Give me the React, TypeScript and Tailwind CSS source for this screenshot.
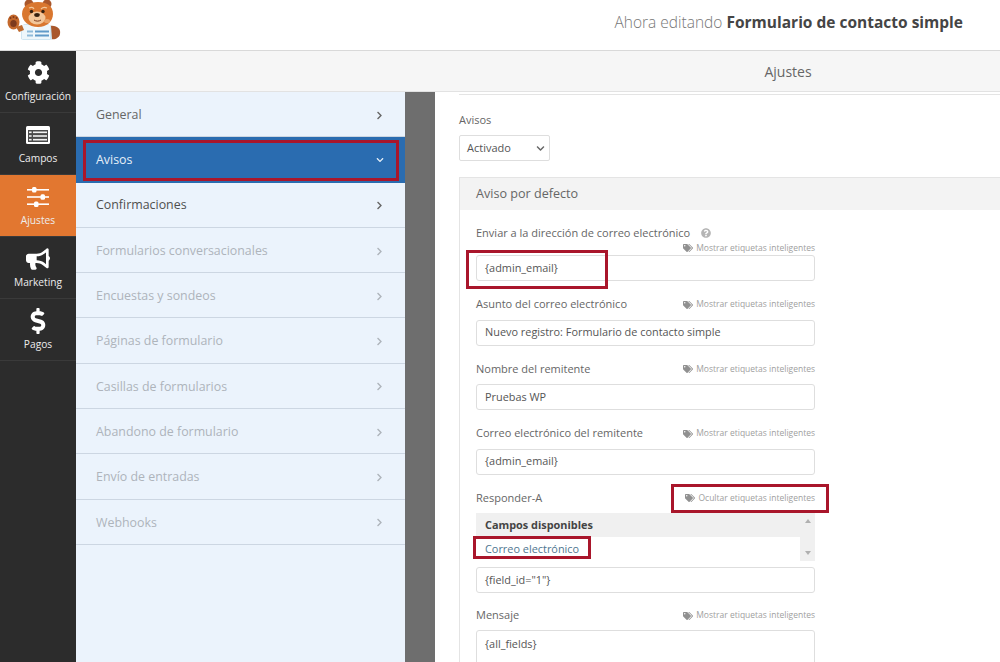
import { FaBullhorn, FaChevronDown, FaChevronRight, FaCog, FaDollarSign, FaQuestionCircle, FaTags } from "react-icons/fa";
import type { ReactNode } from "react";

function CamposIcon() {
  return (
    <svg width="24" height="18" viewBox="0 0 24 18">
      <rect x="0" y="0" width="24" height="18" rx="1.5" fill="#fff" />
      <rect x="2" y="4" width="20" height="12" fill="#4a4a4a" />
      <rect x="7" y="5.5" width="14" height="1.6" fill="#f2f2f2" />
      <rect x="7" y="9.2" width="14" height="1.6" fill="#f2f2f2" />
      <rect x="7" y="12.9" width="14" height="1.6" fill="#f2f2f2" />
      <rect x="3" y="5.5" width="2.6" height="1.6" fill="#f2f2f2" />
      <rect x="3" y="9.2" width="2.6" height="1.6" fill="#f2f2f2" />
      <rect x="3" y="12.9" width="2.6" height="1.6" fill="#f2f2f2" />
    </svg>
  );
}

function AjustesIcon() {
  return (
    <svg width="22" height="20" viewBox="0 0 22 20" fill="#fff">
      <rect x="0" y="2" width="22" height="1.6" />
      <rect x="0" y="9.2" width="22" height="1.6" />
      <rect x="0" y="16.4" width="22" height="1.6" />
      <rect x="5" y="0" width="4.5" height="5.6" rx="1.5" />
      <rect x="13.5" y="7.2" width="4.5" height="5.6" rx="1.5" />
      <rect x="7" y="14.4" width="4.5" height="5.6" rx="1.5" />
    </svg>
  );
}

const nav: { label: string; icon: ReactNode; active?: boolean }[] = [
  { label: "Configuración", icon: <FaCog size={23} /> },
  { label: "Campos", icon: <CamposIcon /> },
  { label: "Ajustes", icon: <AjustesIcon />, active: true },
  { label: "Marketing", icon: <FaBullhorn size={24} /> },
  { label: "Pagos", icon: <FaDollarSign size={26} /> },
];

const menu = [
  { label: "General", tone: "text-[#666]" },
  { label: "Avisos", active: true },
  { label: "Confirmaciones", tone: "text-[#4f4f4f]" },
  { label: "Formularios conversacionales" },
  { label: "Encuestas y sondeos" },
  { label: "Páginas de formulario" },
  { label: "Casillas de formularios" },
  { label: "Abandono de formulario" },
  { label: "Envío de entradas" },
  { label: "Webhooks" },
];

function Bear() {
  return (
    <svg width="70" height="50" viewBox="0 0 70 50" className="block">
      {/* tail */}
      <path d="M50 26c7-1 11 3 10 8-1 4-5 6-9 5z" fill="#a9572b" />
      {/* shirt */}
      <path d="M24 24h24l3 2 1 13-2 1H23l-2-1v-12z" fill="#cfe6f2" />
      <rect x="22" y="25" width="28" height="14" fill="#eef7fb" />
      <path d="M30 24l6 5 6-5z" fill="#ffffff" />
      <rect x="27" y="30.5" width="6" height="2" fill="#8fbbd9" />
      <rect x="35" y="30.5" width="14" height="2" fill="#5f9ac8" />
      <rect x="27" y="34.5" width="6" height="2" fill="#8fbbd9" />
      <rect x="35" y="34.5" width="14" height="2" fill="#5f9ac8" />
      {/* ears */}
      <circle cx="29" cy="4" r="4.5" fill="#a9572b" />
      <circle cx="47" cy="4" r="4.5" fill="#a9572b" />
      {/* head */}
      <path d="M22 14c0-8 7-12 16-12s15 4 15 12c0 7-6 13-15 13s-16-6-16-13z" fill="#d9772f" />
      <ellipse cx="37" cy="18" rx="8.5" ry="6.5" fill="#f2c79a" />
      <path d="M29 8c2-1 4-1 5 1M41 9c2-2 4-2 6-1" stroke="#f2c79a" strokeWidth="1.2" fill="none" />
      <circle cx="31.5" cy="11.5" r="1.7" fill="#34200f" />
      <circle cx="43" cy="11.5" r="1.7" fill="#34200f" />
      <ellipse cx="37" cy="15" rx="2.8" ry="1.9" fill="#34200f" />
      <path d="M34 20c2 1.5 5 1.5 7 0" stroke="#7d3a1c" strokeWidth="1" fill="none" />
      <ellipse cx="47" cy="21" rx="3" ry="2" fill="#e8a165" />
      {/* arm and paw */}
      <path d="M22 25l-6 2 3 5 5-2z" fill="#bf6a2e" />
      <ellipse cx="13.5" cy="22" rx="6" ry="7.5" fill="#c4692c" />
      <ellipse cx="13.5" cy="23.5" rx="3.2" ry="3.6" fill="#7d3a1c" />
      <circle cx="10.5" cy="18" r="1" fill="#7d3a1c" />
      <circle cx="13.5" cy="17" r="1" fill="#7d3a1c" />
      <circle cx="16.5" cy="18" r="1" fill="#7d3a1c" />
    </svg>
  );
}

function SmartTags({ label = "Mostrar etiquetas inteligentes" }: { label?: string }) {
  return (
    <span className="flex items-center gap-[3px] text-[8.5px] leading-none text-[#a0a0a0]">
      <FaTags size={10} className="text-[#909090]" />
      {label}
    </span>
  );
}

function Field({ label, value }: { label: string; value: string }) {
  return (
    <div className="mt-[15.5px]">
      <div className="flex h-[16px] items-center justify-between">
        <span className="text-[11px] text-[#666]">{label}</span>
        <SmartTags />
      </div>
      <div className="mt-[7px] flex h-[26px] items-center rounded-[3px] border border-[#dedede] bg-white px-[8px] text-[10.9px] text-[#555]">
        {value}
      </div>
    </div>
  );
}

export default function App() {
  return (
    <div
      className="flex h-[662px] w-[1000px] flex-col overflow-hidden bg-white"
      style={{ fontFamily: '"Open Sans", "Noto Sans", sans-serif' }}
    >
      <header className="flex h-[51px] shrink-0 items-start justify-between border-b border-[#d9d9d9] pr-[37px]">
        <Bear />
        <p className="mt-[11px] text-[15.5px] font-light leading-[22px] text-[#777]">
          Ahora editando <b className="font-bold text-[#454545]">Formulario de contacto simple</b>
        </p>
      </header>

      <div className="flex min-h-0 flex-1">
        <aside className="w-[76px] shrink-0 bg-[#2c2c2c]">
          {nav.map(({ label, icon, active }) => (
            <div
              key={label}
              className={`flex h-[62px] flex-col items-center border-b border-[#3a3a3a] pt-[9px] text-white ${
                active ? "bg-[#e27730]" : ""
              }`}
            >
              <div className="flex h-[25px] items-center">{icon}</div>
              <span className="mt-[4px] whitespace-nowrap text-[10.2px] leading-[14px] text-[#ededed]">{label}</span>
            </div>
          ))}
        </aside>

        <div className="flex min-w-0 flex-1 flex-col">
          <div className="flex h-[41px] shrink-0 items-center justify-center border-b border-[#e2e2e2] bg-[#f6f6f6] pl-[500px] text-[14px] text-[#666]">
            Ajustes
          </div>

          <div className="flex min-h-0 flex-1">
            <ul className="w-[329px] shrink-0 bg-[#ebf3fc]">
              {menu.map((item) => (
                <li
                  key={item.label}
                  className={`flex h-[45.3px] items-center justify-between border-b pl-[20px] pr-[21px] pt-[2px] text-[12.4px] ${
                    item.active
                      ? "border-[#2a6cb0] bg-[#2a6cb0] text-[#e6eff8]"
                      : `border-[#ccd6e2] ${item.tone ?? "text-[#aeb4bb]"}`
                  }`}
                >
                  {item.label}
                  {item.active ? (
                    <FaChevronDown size={8} />
                  ) : (
                    <FaChevronRight size={9} className={item.tone ? "text-[#666]" : "text-[#aeb4bb]"} />
                  )}
                </li>
              ))}
            </ul>

            <div className="w-[30px] shrink-0 bg-[#6e6e6e]" />

            <main className="min-w-0 flex-1 bg-white pl-[24px]">
              <div className="h-[3px] border-b border-[#e4e4e4]" />
              <p className="mt-[17px] text-[11px] leading-[16px] text-[#666]">Avisos</p>
              <div className="mt-[7px] flex h-[26px] w-[91px] items-center justify-between rounded-[2px] border border-[#dedede] pl-[7px] pr-[3px] text-[11px] text-[#555]">
                Activado
                <FaChevronDown size={9} className="mr-[1px] text-[#666]" />
              </div>

              <section className="mt-[16px] border-l border-t border-[#e4e4e4]">
                <h2 className="flex h-[32px] items-center bg-[#f3f3f3] pl-[16px] text-[12.6px] font-normal text-[#666]">
                  Aviso por defecto
                </h2>

                <div className="relative box-content w-[339px] pl-[16px] pt-[16px]">
                  <div className="flex h-[14px] items-center gap-[11px] text-[11px] text-[#666]">
                    Enviar a la dirección de correo electrónico
                    <FaQuestionCircle size={10} className="text-[#b5b5b5]" />
                  </div>
                  <div className="mt-[3.5px] flex h-[9px] justify-end">
                    <SmartTags />
                  </div>
                  <div className="mt-[2.5px] flex h-[26px] items-center rounded-[3px] border border-[#dedede] px-[8px] text-[10.9px] text-[#555]">
                    {"{admin_email}"}
                  </div>

                  <Field label="Asunto del correo electrónico" value="Nuevo registro: Formulario de contacto simple" />
                  <Field label="Nombre del remitente" value="Pruebas WP" />
                  <Field label="Correo electrónico del remitente" value="{admin_email}" />

                  <div className="mt-[15.5px]">
                    <div className="flex h-[16px] items-center justify-between">
                      <span className="text-[11px] text-[#666]">Responder-A</span>
                      <SmartTags label="Ocultar etiquetas inteligentes" />
                    </div>
                    <div className="mt-[7px] flex h-[48px] bg-[#f0f0f0] text-[10.9px]">
                      <div className="flex-1">
                        <div className="flex h-[24px] items-center pl-[9px] font-bold text-[#444]">Campos disponibles</div>
                        <div className="flex h-[24px] items-center bg-white pl-[9px] text-[#4f7690]">Correo electrónico</div>
                      </div>
                      <div className="flex w-[15px] flex-col items-center justify-between py-[6px]">
                        <div className="h-0 w-0 border-x-[3px] border-b-[4px] border-x-transparent border-b-[#b0b0b0]" />
                        <div className="h-0 w-0 border-x-[3px] border-t-[4px] border-x-transparent border-t-[#b0b0b0]" />
                      </div>
                    </div>
                    <div className="mt-[6px] flex h-[26px] items-center rounded-[3px] border border-[#dedede] px-[8px] text-[10.9px] text-[#555]">
                      {'{field_id="1"}'}
                    </div>
                  </div>

                  <div className="mt-[14.5px]">
                    <div className="flex h-[16px] items-center justify-between">
                      <span className="text-[11px] text-[#666]">Mensaje</span>
                      <SmartTags />
                    </div>
                    <div className="mt-[6.5px] h-[60px] rounded-[3px] border border-[#dedede] px-[8px] pt-[5px] text-[10.9px] text-[#555]">
                      {"{all_fields}"}
                    </div>
                  </div>

                  {/* red annotation boxes drawn on top of the form */}
                  <div className="absolute left-[6px] top-[40px] h-[39px] w-[142px] border-[3px] border-[#a9162b]" />
                  <div className="absolute left-[211px] top-[274px] h-[29px] w-[158px] border-[3px] border-[#a9162b]" />
                  <div className="absolute left-[13px] top-[326px] h-[23px] w-[118px] border-[3px] border-[#a9162b]" />
                </div>
              </section>
            </main>
          </div>
        </div>
      </div>

      {/* red annotation around the active menu row */}
      <div className="absolute left-[83px] top-[140px] h-[41px] w-[316px] border-[3px] border-[#a9162b]" />
    </div>
  );
}
